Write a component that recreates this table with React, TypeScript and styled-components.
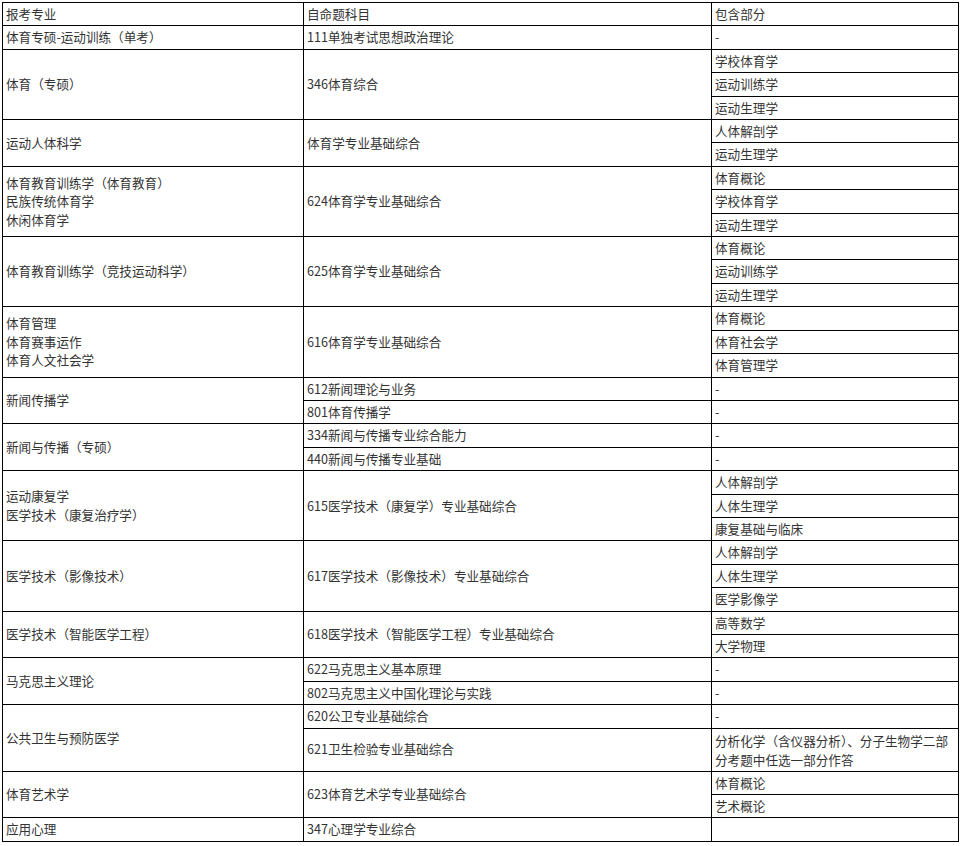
import styled, { createGlobalStyle } from "styled-components";

type Subject = { name: string; parts: string[] };
type Group = { major: string[]; subjects: Subject[] };

const groups: Group[] = [
  { major: ["体育专硕-运动训练（单考）"], subjects: [{ name: "111单独考试思想政治理论", parts: ["-"] }] },
  { major: ["体育（专硕）"], subjects: [{ name: "346体育综合", parts: ["学校体育学", "运动训练学", "运动生理学"] }] },
  { major: ["运动人体科学"], subjects: [{ name: "体育学专业基础综合", parts: ["人体解剖学", "运动生理学"] }] },
  {
    major: ["体育教育训练学（体育教育）", "民族传统体育学", "休闲体育学"],
    subjects: [{ name: "624体育学专业基础综合", parts: ["体育概论", "学校体育学", "运动生理学"] }],
  },
  {
    major: ["体育教育训练学（竞技运动科学）"],
    subjects: [{ name: "625体育学专业基础综合", parts: ["体育概论", "运动训练学", "运动生理学"] }],
  },
  {
    major: ["体育管理", "体育赛事运作", "体育人文社会学"],
    subjects: [{ name: "616体育学专业基础综合", parts: ["体育概论", "体育社会学", "体育管理学"] }],
  },
  {
    major: ["新闻传播学"],
    subjects: [
      { name: "612新闻理论与业务", parts: ["-"] },
      { name: "801体育传播学", parts: ["-"] },
    ],
  },
  {
    major: ["新闻与传播（专硕）"],
    subjects: [
      { name: "334新闻与传播专业综合能力", parts: ["-"] },
      { name: "440新闻与传播专业基础", parts: ["-"] },
    ],
  },
  {
    major: ["运动康复学", "医学技术（康复治疗学）"],
    subjects: [{ name: "615医学技术（康复学）专业基础综合", parts: ["人体解剖学", "人体生理学", "康复基础与临床"] }],
  },
  {
    major: ["医学技术（影像技术）"],
    subjects: [{ name: "617医学技术（影像技术）专业基础综合", parts: ["人体解剖学", "人体生理学", "医学影像学"] }],
  },
  {
    major: ["医学技术（智能医学工程）"],
    subjects: [{ name: "618医学技术（智能医学工程）专业基础综合", parts: ["高等数学", "大学物理"] }],
  },
  {
    major: ["马克思主义理论"],
    subjects: [
      { name: "622马克思主义基本原理", parts: ["-"] },
      { name: "802马克思主义中国化理论与实践", parts: ["-"] },
    ],
  },
  {
    major: ["公共卫生与预防医学"],
    subjects: [
      { name: "620公卫专业基础综合", parts: ["-"] },
      { name: "621卫生检验专业基础综合", parts: ["分析化学（含仪器分析）、分子生物学二部分考题中任选一部分作答"] },
    ],
  },
  { major: ["体育艺术学"], subjects: [{ name: "623体育艺术学专业基础综合", parts: ["体育概论", "艺术概论"] }] },
  { major: ["应用心理"], subjects: [{ name: "347心理学专业综合", parts: [""] }] },
];

const GlobalStyle = createGlobalStyle`
  html, body {
    margin: 0;
    padding: 0;
    background: #fff;
  }
`;

const Page = styled.div`
  padding: 2px;
`;

const Table = styled.table`
  width: 956px;
  border-collapse: collapse;
  table-layout: fixed;
  border: 1px solid #000;
  font-family: "Noto Sans CJK SC", "Noto Sans", sans-serif;
  font-size: 12.6px;
  color: #333;
`;

const Cell = styled.td<{ $wrapped?: boolean }>`
  border: 1px solid #000;
  padding: 2px 3px;
  line-height: ${(p) => (p.$wrapped ? "19px" : "18.4px")};
  vertical-align: middle;
  text-align: left;
  word-break: break-all;
`;

const HeadCell = styled(Cell).attrs({ as: "th" })`
  font-weight: normal;
`;

function App() {
  const rows: JSX.Element[] = [];
  groups.forEach((g, gi) => {
    const total = g.subjects.reduce((n, s) => n + s.parts.length, 0);
    let first = true;
    g.subjects.forEach((s, si) => {
      s.parts.forEach((p, pi) => {
        rows.push(
          <tr key={`${gi}-${si}-${pi}`}>
            {first && (
              <Cell rowSpan={total}>
                {g.major.map((m, mi) => (
                  <div key={mi}>{m}</div>
                ))}
              </Cell>
            )}
            {pi === 0 && <Cell rowSpan={s.parts.length}>{s.name}</Cell>}
            <Cell $wrapped={p.length > 19}>{p}</Cell>
          </tr>
        );
        first = false;
      });
    });
  });

  return (
    <>
      <GlobalStyle />
      <Page>
        <Table>
          <colgroup>
            <col style={{ width: 301 }} />
            <col style={{ width: 408 }} />
            <col style={{ width: 247 }} />
          </colgroup>
          <thead>
            <tr>
              <HeadCell>报考专业</HeadCell>
              <HeadCell>自命题科目</HeadCell>
              <HeadCell>包含部分</HeadCell>
            </tr>
          </thead>
          <tbody>{rows}</tbody>
        </Table>
      </Page>
    </>
  );
}

export default App;
